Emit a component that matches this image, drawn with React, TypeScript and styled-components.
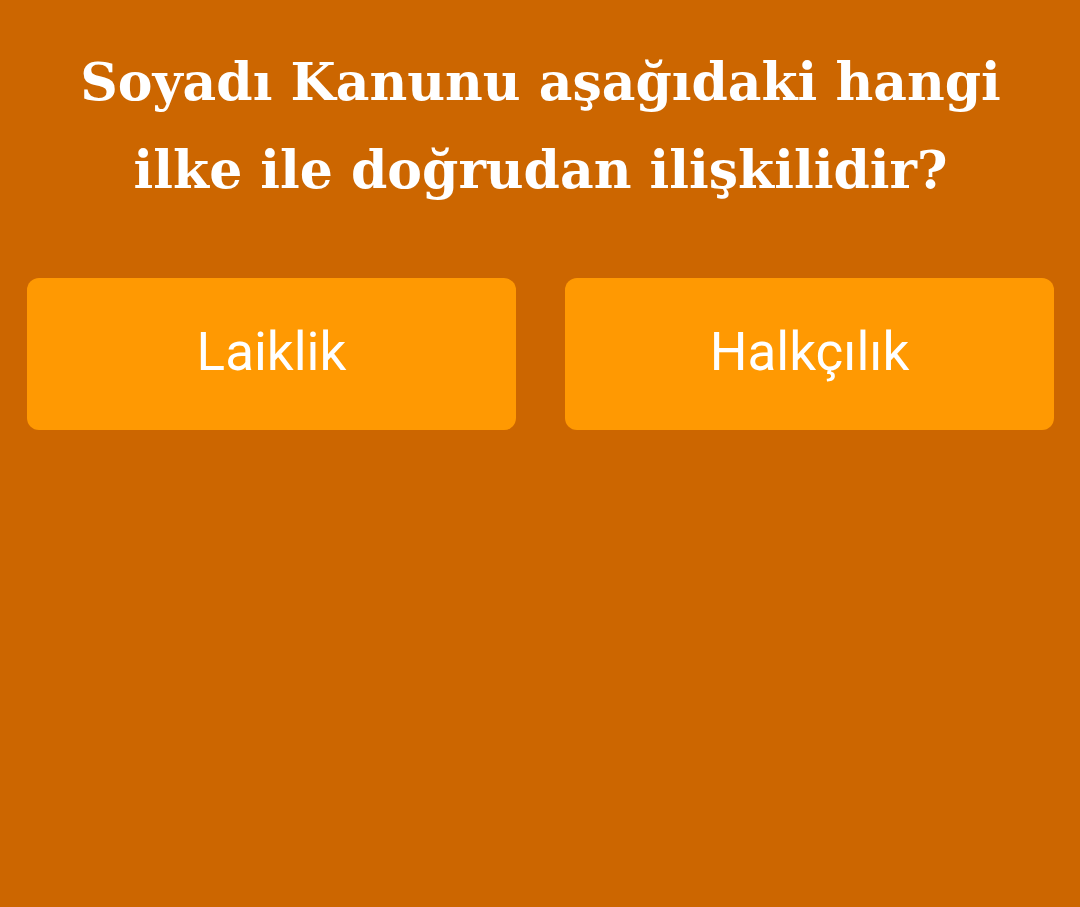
import styled, { createGlobalStyle } from 'styled-components';

const GlobalStyle = createGlobalStyle`
  html, body {
    margin: 0;
    padding: 0;
    background: #cc6600;
  }
`;

const Screen = styled.div`
  min-height: 907px;
  background: #cc6600;
  padding: 38px 26px 0 27px;
  box-sizing: border-box;
`;

const Question = styled.h1`
  margin: 0;
  text-align: center;
  color: #ffffff;
  font-family: "DejaVu Serif", "Liberation Serif", serif;
  font-weight: bold;
  font-size: 52px;
  line-height: 88px;
  padding: 0 30px;
`;

const Answers = styled.div`
  display: grid;
  grid-template-columns: 1fr 1fr;
  column-gap: 49px;
  margin-top: 64px;
`;

const AnswerButton = styled.button`
  height: 152px;
  padding: 0 0 4px;
  border: none;
  border-radius: 12px;
  background: #ff9902;
  color: #ffffff;
  font-family: Roboto, "Liberation Sans", sans-serif;
  font-size: 53px;
  cursor: pointer;
`;

const answers = ['Laiklik', 'Halkçılık'];

export default function App() {
  return (
    <>
      <GlobalStyle />
      <Screen>
        <Question>Soyadı Kanunu aşağıdaki hangi ilke ile doğrudan ilişkilidir?</Question>
        <Answers>
          {answers.map((a) => (
            <AnswerButton key={a}>{a}</AnswerButton>
          ))}
        </Answers>
      </Screen>
    </>
  );
}
